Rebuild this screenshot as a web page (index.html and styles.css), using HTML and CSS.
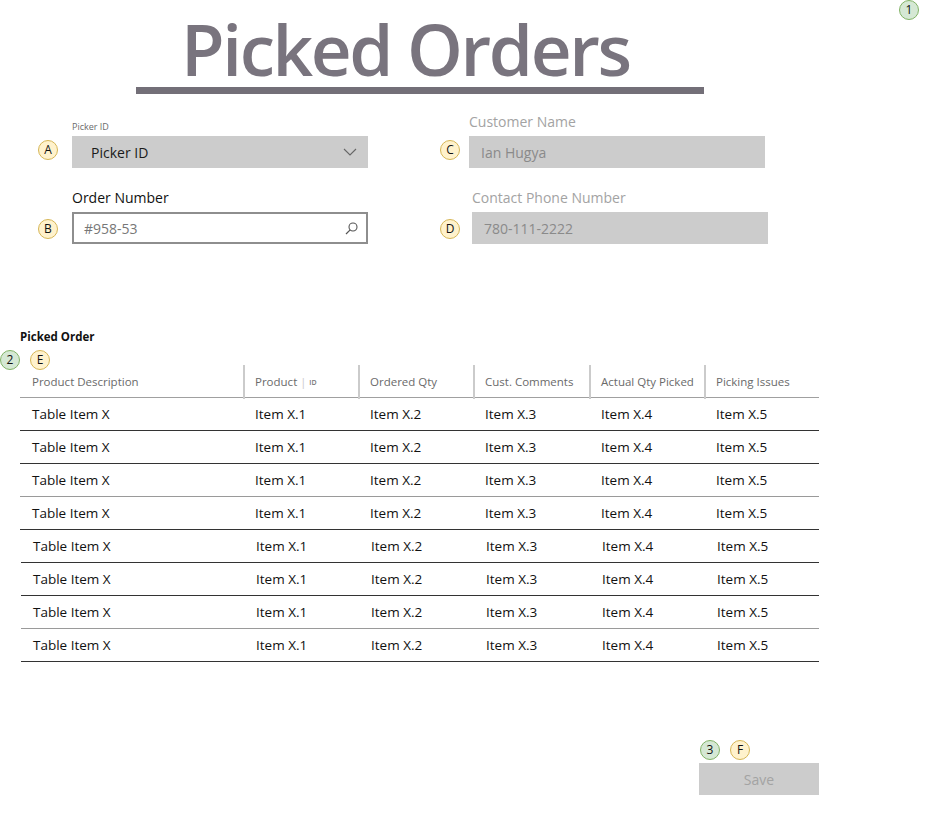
FILE: index.html
```html
<!DOCTYPE html>
<html lang="en">
<head>
<meta charset="utf-8">
<title>Picked Orders</title>
<link rel="stylesheet" href="styles.css">
</head>
<body>
<div class="page">
  <header class="masthead">
    <h1 class="title">Picked Orders</h1>
    <div class="title-bar"></div>
  </header>

  <section class="form">
    <div class="field">
      <label class="label label-small">Picker ID</label>
      <div class="select">
        <span>Picker ID</span>
        <svg class="chev" width="14" height="8" viewBox="0 0 14 8"><path d="M1 1 L7 7 L13 1" fill="none" stroke="#666" stroke-width="1.1"/></svg>
      </div>
    </div>
    <div class="field">
      <label class="label label-muted">Customer Name</label>
      <div class="readonly">Ian Hugya</div>
    </div>
    <div class="field">
      <label class="label label-strong">Order Number</label>
      <div class="search">
        <span>#958-53</span>
        <svg class="mag" width="13" height="13" viewBox="0 0 13 13"><circle cx="8" cy="5" r="4" fill="none" stroke="#555" stroke-width="1.1"/><path d="M5.2 7.8 L1 12" stroke="#555" stroke-width="1.2"/></svg>
      </div>
    </div>
    <div class="field field-shift">
      <label class="label label-muted">Contact Phone Number</label>
      <div class="readonly">780-111-2222</div>
    </div>
  </section>

  <h2 class="section-title">Picked Order</h2>

  <div class="table">
    <div class="row head">
      <div class="cell">Product Description</div>
      <div class="cell sep">Product <span class="pipe">|</span> <span class="tiny">ID</span></div>
      <div class="cell sep">Ordered Qty</div>
      <div class="cell sep">Cust. Comments</div>
      <div class="cell sep">Actual Qty Picked</div>
      <div class="cell sep">Picking Issues</div>
    </div>
    <div class="row dark"><div class="cell">Table Item X</div><div class="cell">Item X.1</div><div class="cell">Item X.2</div><div class="cell">Item X.3</div><div class="cell">Item X.4</div><div class="cell">Item X.5</div></div>
    <div class="row dark"><div class="cell">Table Item X</div><div class="cell">Item X.1</div><div class="cell">Item X.2</div><div class="cell">Item X.3</div><div class="cell">Item X.4</div><div class="cell">Item X.5</div></div>
    <div class="row light"><div class="cell">Table Item X</div><div class="cell">Item X.1</div><div class="cell">Item X.2</div><div class="cell">Item X.3</div><div class="cell">Item X.4</div><div class="cell">Item X.5</div></div>
    <div class="row dark"><div class="cell">Table Item X</div><div class="cell">Item X.1</div><div class="cell">Item X.2</div><div class="cell">Item X.3</div><div class="cell">Item X.4</div><div class="cell">Item X.5</div></div>
    <div class="row dark shifted"><div class="cell">Table Item X</div><div class="cell">Item X.1</div><div class="cell">Item X.2</div><div class="cell">Item X.3</div><div class="cell">Item X.4</div><div class="cell">Item X.5</div></div>
    <div class="row dark shifted"><div class="cell">Table Item X</div><div class="cell">Item X.1</div><div class="cell">Item X.2</div><div class="cell">Item X.3</div><div class="cell">Item X.4</div><div class="cell">Item X.5</div></div>
    <div class="row light shifted"><div class="cell">Table Item X</div><div class="cell">Item X.1</div><div class="cell">Item X.2</div><div class="cell">Item X.3</div><div class="cell">Item X.4</div><div class="cell">Item X.5</div></div>
    <div class="row dark shifted"><div class="cell">Table Item X</div><div class="cell">Item X.1</div><div class="cell">Item X.2</div><div class="cell">Item X.3</div><div class="cell">Item X.4</div><div class="cell">Item X.5</div></div>
  </div>

  <div class="actions">
    <button class="save" type="button">Save</button>
  </div>

  <span class="badge green b1">1</span>
  <span class="badge green b2">2</span>
  <span class="badge yellow bE">E</span>
  <span class="badge yellow bA">A</span>
  <span class="badge yellow bB">B</span>
  <span class="badge yellow bC">C</span>
  <span class="badge yellow bD">D</span>
  <span class="badge green b3">3</span>
  <span class="badge yellow bF">F</span>
</div>
</body>
</html>
```

FILE: styles.css
```css
* { box-sizing: border-box; }

html, body {
  margin: 0;
  padding: 0;
  background: #fff;
}

body {
  font-family: "Open Sans", "Noto Sans", "Liberation Sans", sans-serif;
  color: #111;
}

.page {
  position: relative;
  width: 942px;
  min-height: 819px;
}

/* Title */
.masthead {
  margin-left: 136px;
  width: 568px;
  padding-top: 10px;
}

.title {
  margin: 0;
  padding-left: 45px;
  font-size: 71px;
  line-height: 77px;
  font-weight: 600;
  letter-spacing: -2.4px;
  color: #79747e;
  white-space: nowrap;
}

.title-bar {
  height: 7px;
  background: #736f78;
}

/* Form */
.form {
  display: grid;
  grid-template-columns: 296px 296px;
  column-gap: 101px;
  row-gap: 19px;
  align-items: end;
  margin-left: 72px;
  padding-top: 18px;
}

.field {
  display: flex;
  flex-direction: column;
}

.field-shift {
  margin-left: 3px;
  margin-right: -3px;
  padding-top: 1px;
}

.label {
  display: block;
  font-size: 14px;
  line-height: 19px;
  margin-bottom: 5px;
}

.label-small {
  font-size: 9px;
  line-height: 12px;
  margin-bottom: 3.5px;
  color: #6b6b6b;
}

.label-muted {
  color: #a3a3a3;
}

.label-strong {
  color: #111;
}

.select,
.readonly {
  height: 32px;
  background: #cccccc;
  display: flex;
  align-items: center;
  font-size: 14px;
}

.select {
  padding: 0 11px 0 19px;
  justify-content: space-between;
  color: #1a1a1a;
}

.readonly {
  padding-left: 12px;
  color: #8a8a8a;
}

.search {
  height: 32px;
  border: 2px solid #8e8e8e;
  display: flex;
  align-items: center;
  justify-content: space-between;
  padding: 0 8px 0 10px;
  font-size: 14px;
  color: #777;
}

.chev { display: block; }
.mag { display: block; }

/* Section title */
.section-title {
  margin: 85px 0 0 20px;
  font-size: 11.5px;
  line-height: 16px;
  font-weight: 700;
  color: #111;
}

/* Table */
.table {
  margin: 20px 0 0 20px;
  width: 799px;
}

.row {
  display: grid;
  grid-template-columns: 223px 115px 115px 116px 115px 115px;
  height: 33px;
  border-bottom: 1px solid #333;
}

.row.head {
  border-bottom-color: #a0a0a0;
}

.row.light {
  border-bottom-color: #9a9a9a;
}

.row.shifted {
  margin-left: 1px;
}

.cell {
  padding-left: 12px;
  font-size: 13.5px;
  line-height: 32px;
  color: #111;
  white-space: nowrap;
}

.head .cell {
  font-size: 11.5px;
  line-height: 32px;
  padding-top: 1px;
  color: #6a6a6a;
}

.head .cell.sep {
  border-left: 2px solid #cbcbcb;
  padding-left: 10px;
}

.pipe {
  color: #c8c8c8;
  font-size: 11px;
}

.tiny {
  font-size: 7px;
  font-weight: 600;
  color: #777;
  vertical-align: 1px;
}

/* Save */
.actions {
  display: flex;
  justify-content: flex-end;
  width: 819px;
  margin-top: 101px;
}

.save {
  width: 120px;
  height: 32px;
  border: 0;
  background: #cccccc;
  color: #a3a3a3;
  font-family: inherit;
  font-size: 14px;
  padding: 0;
}

/* Annotation badges */
.badge {
  position: absolute;
  width: 20px;
  height: 20px;
  border-radius: 50%;
  display: flex;
  align-items: center;
  justify-content: center;
  font-size: 12px;
  line-height: 1;
  color: #111;
}

.badge.green {
  background: #d5e8d4;
  border: 1px solid #82b366;
}

.badge.yellow {
  background: #fff2cc;
  border: 1px solid #d6b656;
}

.b1 { left: 899px; top: 0; }
.b2 { left: 0; top: 350px; }
.bE { left: 30px; top: 350px; }
.bA { left: 38px; top: 140px; }
.bB { left: 38px; top: 219px; }
.bC { left: 440px; top: 140px; }
.bD { left: 440px; top: 219px; }
.b3 { left: 700px; top: 740px; }
.bF { left: 730px; top: 740px; }
```
